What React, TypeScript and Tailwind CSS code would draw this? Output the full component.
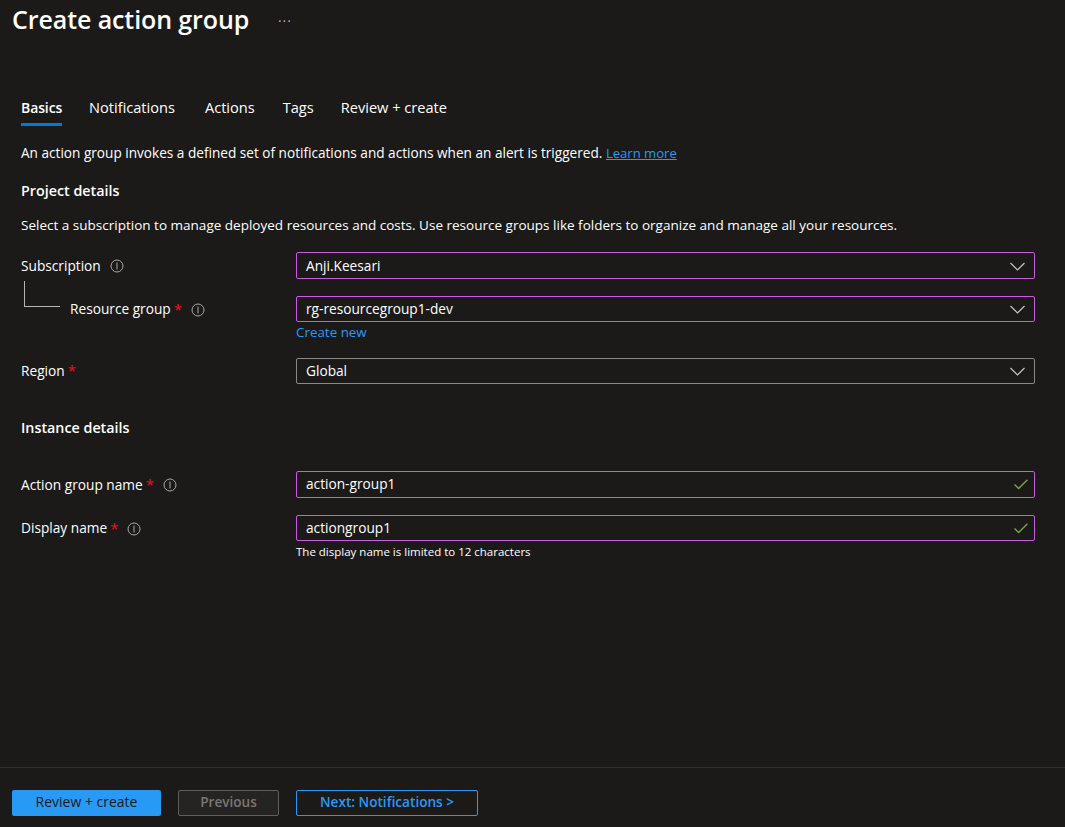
const font = 'font-["Open_Sans","Noto_Sans",sans-serif]'

function Req() {
  return <span className="ml-[3px] text-[#e81123] text-[15px] leading-none">*</span>
}

function Tip() {
  return (
    <svg width="14" height="14" viewBox="0 0 14 14" fill="none" className="ml-[9px] shrink-0 text-[#a8a8a8]">
      <circle cx="7" cy="7" r="6" stroke="currentColor" strokeWidth="1" />
      <path d="M7 3.5V10.5" stroke="currentColor" strokeWidth="1" />
    </svg>
  )
}

function Field({ value, kind, active = true, h = 'h-[27px]' }: { value: string; kind: 'select' | 'text'; active?: boolean; h?: string }) {
  return (
    <div className={`${h} w-[739px] flex items-center justify-between pl-[9px] rounded-[2px] border ${kind === 'select' ? 'pr-[9px]' : 'pr-[6px]'} ${active ? 'border-[#c95be0]' : 'border-[#8a8886]'}`}>
      <span className="text-[13.7px] text-white">{value}</span>
      {kind === 'select' ? (
        <svg width="15" height="9" viewBox="0 0 15 9" fill="none" className="text-[#c8c6c4]">
          <path d="M0.5 1L7.5 8L14.5 1" stroke="currentColor" strokeWidth="1.2" />
        </svg>
      ) : (
        <svg width="14" height="11" viewBox="0 0 14 11" fill="none" className="text-[#7ea04d]">
          <path d="M0.6 5.6L4.6 9.6L13.4 0.8" stroke="currentColor" strokeWidth="1.4" />
        </svg>
      )}
    </div>
  )
}

export default function App() {
  return (
    <div className={`${font} h-[827px] w-[1065px] bg-[#1b1a19] text-white flex flex-col overflow-hidden`}>
      <div className="flex items-center pl-[12px] pt-[3px] h-[35px]">
        <h1 className="text-[25px] font-semibold leading-[34px] tracking-[-0.1px]">Create action group</h1>
        <span className="ml-[29px] mt-[5px] text-[#c8c6c4] text-[12px] leading-none tracking-[1.5px]">···</span>
      </div>

      <div className="flex-1 pl-[21px] pr-[20px]">
        <div className="flex mt-[61px] h-[30px] text-[14.6px]">
          <div className="font-semibold text-[14px] tracking-[-0.1px] border-b-[3px] border-[#0078d4] h-[30px] pt-[1px] w-[41px] whitespace-nowrap">Basics</div>
          <div className="flex pl-[27px] pt-[1px]">
            <span>Notifications</span>
            <span className="ml-[30px]">Actions</span>
            <span className="ml-[28px]">Tags</span>
            <span className="ml-[27px]">Review + create</span>
          </div>
        </div>

        <p className="mt-[18px] text-[13.62px] leading-[18px]">
          An action group invokes a defined set of notifications and actions when an alert is triggered.{' '}
          <span className="text-[#2899f5] underline text-[13.1px]">Learn more</span>
        </p>
        <h2 className="mt-[19px] text-[14.3px] leading-[20px] font-semibold">Project details</h2>
        <p className="mt-[15px] text-[13.53px] leading-[18px]">
          Select a subscription to manage deployed resources and costs. Use resource groups like folders to organize and manage all your resources.
        </p>

        <div className="mt-[18px] flex items-center">
          <div className="w-[275px] pt-px flex items-center text-[13.7px]">
            Subscription
            <Tip />
          </div>
          <Field value="Anji.Keesari" kind="select" h="h-[27px] pt-px" />
        </div>

        <div className="mt-[17px] flex items-start">
          <div className="relative w-[275px] h-[27px] flex items-center pl-[49px] text-[13.7px]">
            <div className="absolute left-[3px] -top-[15px] w-[36px] h-[26px] border-l border-b border-[#b5b5b5]" />
            Resource group
            <Req />
            <Tip />
          </div>
          <div>
            <Field value="rg-resourcegroup1-dev" kind="select" h="h-[26px]" />
            <div className="text-[13.4px] leading-[18px] mt-[1px] text-[#2899f5]">Create new</div>
          </div>
        </div>

        <div className="mt-[17px] flex items-center">
          <div className="w-[275px] flex items-center text-[13.7px]">
            Region
            <Req />
          </div>
          <Field value="Global" kind="select" active={false} h="h-[26px]" />
        </div>

        <h2 className="mt-[34px] text-[14.3px] leading-[20px] font-semibold">Instance details</h2>

        <div className="mt-[33px] flex items-center">
          <div className="w-[275px] pt-px flex items-center text-[13.7px]">
            Action group name
            <Req />
            <Tip />
          </div>
          <Field value="action-group1" kind="text" />
        </div>

        <div className="mt-[17px] flex items-start">
          <div className="w-[275px] h-[27px] flex items-center text-[13.7px]">
            Display name
            <Req />
            <Tip />
          </div>
          <div>
            <Field value="actiongroup1" kind="text" h="h-[26px]" />
            <div className="mt-[3px] text-[11.5px] leading-[16px]">The display name is limited to 12 characters</div>
          </div>
        </div>
      </div>

      <div className="h-[60px] border-t border-[#323130] flex items-start pl-[12px] pt-[22px] text-[13.6px] font-semibold">
        <button className="w-[149px] h-[26px] pb-[3px] rounded-[2px] bg-[#2899f5] text-[#1b1a19] font-normal text-[14px]">Review + create</button>
        <button className="ml-[17px] w-[101px] h-[26px] pb-px rounded-[2px] bg-[#252423] border border-[#605e5c] text-[#797775]">Previous</button>
        <button className="ml-[17px] w-[182px] h-[26px] pb-px rounded-[2px] border border-[#2899f5] text-[#2899f5]">Next: Notifications &gt;</button>
      </div>
    </div>
  )
}
